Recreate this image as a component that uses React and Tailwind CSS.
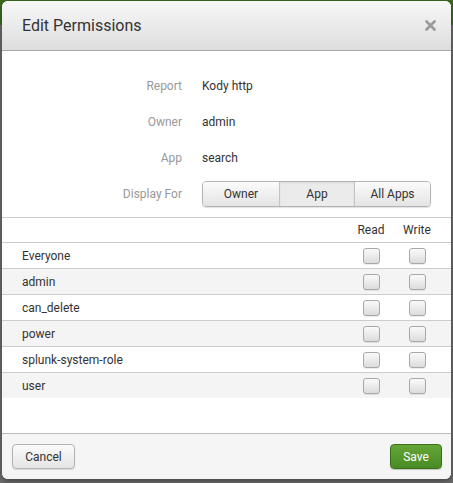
import React from "react";

const roles = ["Everyone", "admin", "can_delete", "power", "splunk-system-role", "user"];

function Checkbox() {
  return (
    <span className="block w-[17px] h-[16px] rounded-[3px] border border-[#a8a8a8] bg-gradient-to-b from-[#fafafa] to-[#dcdcdc] shadow-[0_1px_0_rgba(0,0,0,0.08)]" />
  );
}

function Field({ label, children }) {
  return (
    <div className="flex items-center h-[36px]">
      <div className="w-[180px] text-right text-[#999]">{label}</div>
      <div className="ml-[20px] text-[#333]">{children}</div>
    </div>
  );
}

export default function App() {
  return (
    <div
      className="w-[453px] h-[483px] bg-[#6c6c6c] overflow-hidden"
      style={{ fontFamily: "Roboto, 'Liberation Sans', sans-serif" }}
    >
      <div className="h-[25px] bg-[#3e6b1f] -mb-[25px]" />
      <div className="relative ml-[2px] mt-[1px] w-[449px] h-[478px] rounded-[6px] bg-white shadow-[0_2px_6px_rgba(0,0,0,0.4)] flex flex-col text-[12px] overflow-hidden">
        {/* header */}
        <div className="h-[50px] shrink-0 flex items-center justify-between pl-[20px] pr-[15px] bg-gradient-to-b from-[#f7f7f7] to-[#dedede] border-b border-[#a9a9a9]">
          <h3 className="text-[16px] text-[#333] font-normal">Edit Permissions</h3>
          <svg width="11" height="11" viewBox="0 0 11 11" className="text-[#9a9a9a]">
            <path d="M1.5 1.5 L9.5 9.5 M9.5 1.5 L1.5 9.5" stroke="currentColor" strokeWidth="2.6" strokeLinecap="round" />
          </svg>
        </div>

        {/* body */}
        <div className="flex-1 pt-[17px]">
          <Field label="Report">Kody http</Field>
          <Field label="Owner">admin</Field>
          <Field label="App">search</Field>
          <Field label="Display For">
            <div className="flex h-[26px] rounded-[4px] border border-[#b3b3b3] shadow-[0_1px_1px_rgba(0,0,0,0.12)] overflow-hidden text-[#333]">
              <button className="w-[76px] bg-gradient-to-b from-[#fbfbfb] to-[#e4e4e4]">Owner</button>
              <button className="w-[75px] border-l border-[#c3c3c3] bg-[#ebebeb] shadow-[inset_0_1px_2px_rgba(0,0,0,0.08)]">App</button>
              <button className="w-[76px] border-l border-[#c3c3c3] bg-gradient-to-b from-[#fbfbfb] to-[#e4e4e4]">All Apps</button>
            </div>
          </Field>

          <div className="mt-[5px] text-[#333]">
            <div className="flex items-center h-[25px] border-t border-[#cccccc]">
              <div className="flex-1" />
              <div className="w-[46px] text-center">Read</div>
              <div className="w-[46px] text-center">Write</div>
              <div className="w-[11px]" />
            </div>
            {roles.map((r, i) => (
              <div
                key={r}
                className={`flex items-center h-[26px] border-t border-[#cccccc] ${i % 2 === 1 ? "bg-[#f4f4f4]" : "bg-white"}`}
              >
                <div className="flex-1 pl-[20px]">{r}</div>
                <div className="w-[46px] flex justify-center">
                  <Checkbox />
                </div>
                <div className="w-[46px] flex justify-center">
                  <Checkbox />
                </div>
                <div className="w-[11px]" />
              </div>
            ))}
          </div>
        </div>

        {/* footer */}
        <div className="h-[46px] shrink-0 flex items-start justify-between pt-[10px] pl-[10px] pr-[9px] bg-[#f5f5f5] border-t border-[#bdbdbd]">
          <button className="w-[63px] h-[25px] rounded-[4px] border border-[#b3b3b3] bg-gradient-to-b from-[#fbfbfb] to-[#e4e4e4] text-[#333] shadow-[0_1px_1px_rgba(0,0,0,0.12)]">
            Cancel
          </button>
          <button className="w-[52px] h-[25px] rounded-[4px] border border-[#3d6e1c] bg-gradient-to-b from-[#65a637] to-[#4a8a25] text-white shadow-[0_1px_1px_rgba(0,0,0,0.2)]">
            Save
          </button>
        </div>
      </div>
    </div>
  );
}
